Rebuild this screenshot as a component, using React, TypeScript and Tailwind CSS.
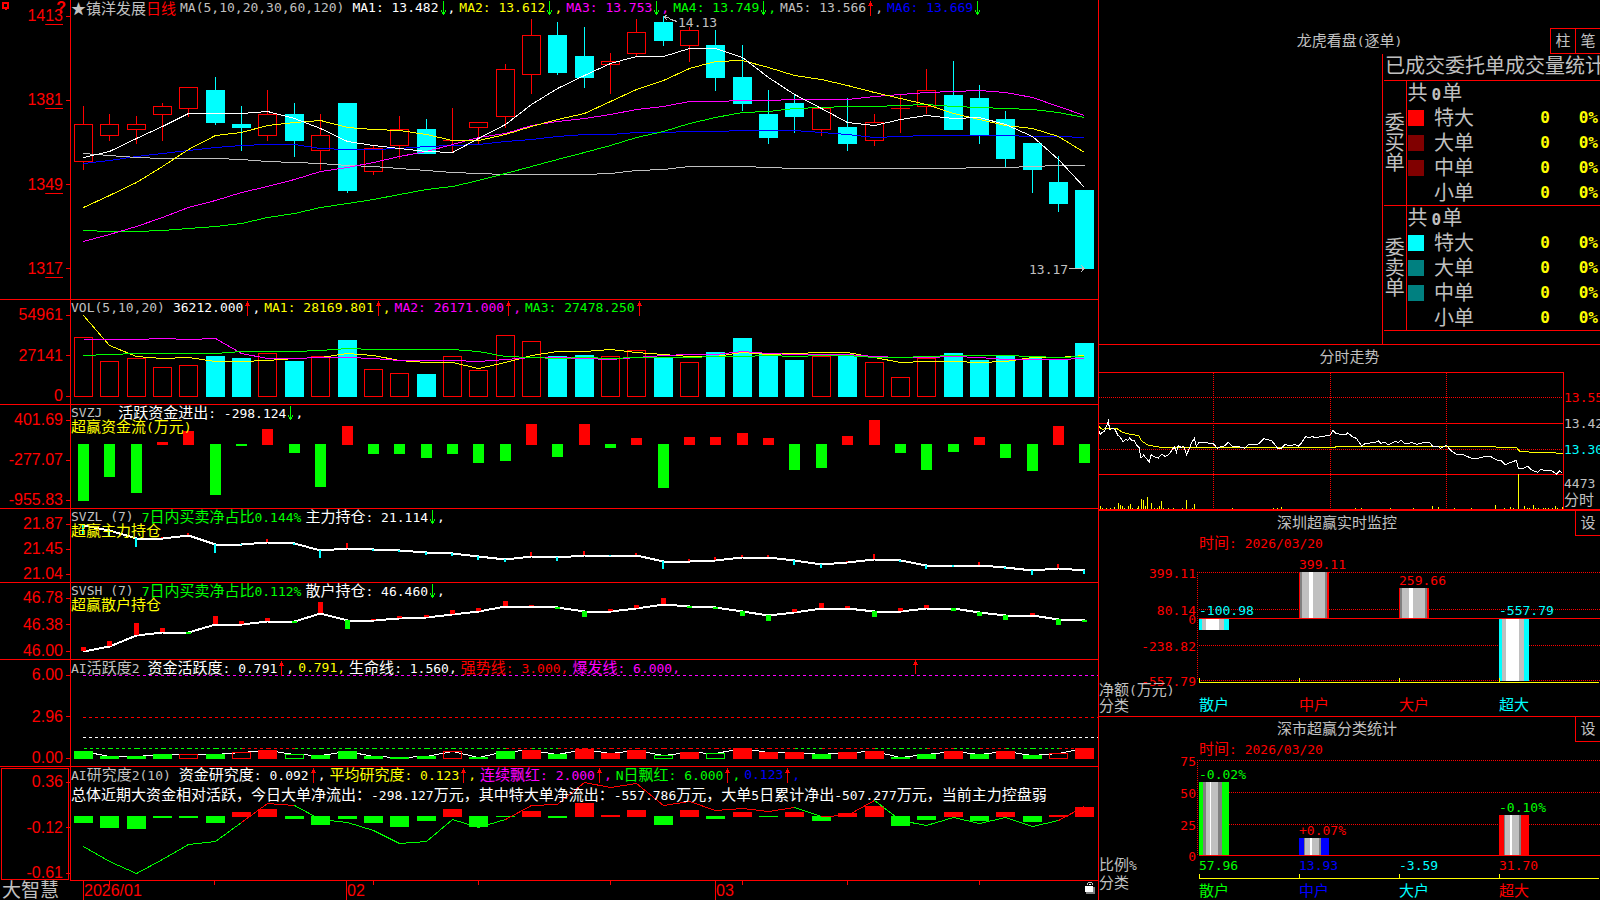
import type { ReactNode } from "react";

const CJK = /([\u3000-\u9fff\uff00-\uffef★]+)/;

// x of the i-th trading day
const X0 = 83;
const STEP = 26.35;
const cx = (i: number) => Math.round(X0 + i * STEP);

type Dir = "up" | "down";

// [rising, high, body top, body bottom, low]
const CANDLES: [number, number, number, number, number][] = [
  [1, 106, 124, 161, 170], [1, 114, 124, 135, 141], [1, 116, 124, 129, 144], [1, 103, 106, 114, 141],
  [1, 87, 87, 108, 117], [0, 77, 90, 123, 125], [0, 106, 124, 128, 151], [1, 90, 114, 135, 141],
  [0, 103, 114, 141, 157], [1, 114, 135, 150, 170], [0, 103, 103, 191, 193], [1, 146, 148, 171, 175],
  [1, 116, 129, 145, 159], [0, 119, 129, 154, 154], [1, 108, 140, 140, 153], [1, 122, 122, 127, 144],
  [1, 64, 69, 116, 128], [1, 19, 35, 74, 94], [0, 22, 35, 73, 75], [0, 27, 56, 78, 88],
  [1, 53, 61, 64, 94], [1, 19, 32, 53, 57], [0, 16, 22, 41, 46], [1, 27, 30, 45, 62],
  [0, 30, 45, 78, 91], [0, 45, 77, 104, 111], [0, 90, 114, 138, 144], [0, 94, 103, 117, 133],
  [1, 107, 108, 129, 136], [0, 98, 127, 144, 151], [1, 114, 122, 140, 146], [1, 95, 108, 108, 133],
  [1, 69, 90, 106, 114], [0, 61, 95, 130, 130], [0, 85, 98, 135, 144], [0, 111, 119, 159, 167],
  [0, 143, 143, 170, 193], [0, 156, 182, 204, 212], [0, 190, 190, 269, 269],
];

const MA: [string, number[]][] = [
  ["#0000ff", [163, 160, 156, 153, 150, 147, 145, 144, 144, 148, 149, 149, 148, 146, 145, 144, 141, 139, 136, 134, 134, 132, 132, 131, 131, 130, 130, 130, 132, 134, 137, 136, 135, 135, 135, 135, 136, 136, 137]],
  ["#c0c0c0", [153, 155, 157, 158, 158, 158, 159, 161, 162, 163, 165, 166, 168, 170, 172, 173, 174, 174, 174, 174, 173, 170, 169, 166, 166, 166, 167, 168, 168, 168, 168, 168, 168, 168, 167, 167, 166, 165, 165]],
  ["#00ff00", [230, 231, 231, 230, 228, 226, 223, 217, 213, 207, 203, 199, 194, 189, 186, 180, 173, 166, 159, 152, 145, 137, 131, 123, 117, 112, 111, 108, 107, 106, 106, 105, 104, 106, 107, 108, 109, 112, 117]],
  ["#ff00ff", [241, 234, 226, 217, 207, 200, 192, 186, 179, 171, 167, 162, 156, 151, 144, 137, 133, 125, 121, 118, 114, 109, 106, 101, 101, 100, 100, 99, 99, 99, 96, 94, 92, 91, 90, 92, 97, 106, 115]],
  ["#ffff00", [207, 195, 182, 166, 149, 135, 132, 125, 122, 120, 127, 129, 130, 134, 140, 140, 134, 126, 119, 113, 101, 89, 80, 68, 61, 60, 67, 75, 79, 85, 92, 98, 104, 113, 119, 125, 128, 136, 152]],
  ["#ffffff", [157, 151, 138, 126, 113, 113, 113, 111, 118, 128, 141, 145, 148, 151, 152, 138, 124, 104, 88, 75, 63, 56, 56, 48, 48, 57, 77, 94, 108, 122, 125, 119, 115, 118, 117, 124, 136, 159, 187]],
];

const VOL = [337, 361, 358, 367, 365, 356, 358, 353, 361, 356, 340, 369, 373, 374, 356, 370, 335, 341, 356, 355, 356, 350, 358, 362, 352, 338, 354, 360, 356, 355, 362, 377, 358, 353, 360, 356, 358, 360, 343];

const VOL_MA: [string, number[]][] = [
  ["#ffff00", [315, 345, 356, 358, 357, 361, 361, 360, 358, 357, 353, 355, 360, 362, 362, 368, 362, 355, 351, 351, 349, 352, 354, 356, 356, 352, 354, 353, 352, 352, 357, 362, 361, 361, 362, 361, 357, 357, 355]],
  ["#ff00ff", [339, 339, 339, 338, 339, 338, 353, 358, 358, 357, 357, 358, 360, 360, 360, 361, 359, 357, 357, 358, 359, 357, 355, 354, 354, 351, 353, 354, 354, 354, 356, 357, 357, 356, 357, 359, 359, 359, 358]],
  ["#00ff00", [355, 354, 353, 353, 353, 353, 351, 351, 351, 350, 348, 349, 349, 349, 349, 351, 356, 357, 358, 357, 358, 357, 357, 357, 356, 356, 355, 356, 355, 355, 357, 357, 356, 355, 355, 355, 356, 357, 356]],
];

// bar ends around a zero line at 444
const FLOW = [501, 477, 493, 442, 431, 495, 446, 429, 453, 487, 426, 454, 454, 458, 454, 463, 461, 424, 457, 424, 448, 438, 488, 437, 437, 433, 438, 470, 468, 436, 420, 453, 470, 452, 437, 458, 471, 426, 463];

const MAIN_HOLD = [525, 530, 538, 538, 535, 544, 544, 542, 543, 550, 548, 549, 550, 552, 553, 556, 559, 556, 557, 555, 555, 555, 561, 561, 560, 557, 557, 560, 564, 562, 559, 560, 565, 565, 565, 567, 570, 568, 570];
const MAIN_TICK = [535, 536, 547, 537, 533, 553, 545, 539, 545, 558, 543, 551, 552, 555, 556, 560, 562, 552, 561, 551, 556, 553, 569, 559, 557, 555, 555, 565, 568, 561, 554, 562, 569, 567, 562, 569, 575, 564, 574];

const RETAIL_HOLD = [651, 646, 635, 632, 632, 624, 624, 621, 621, 613, 620, 620, 618, 617, 614, 611, 606, 606, 607, 611, 611, 608, 604, 606, 607, 611, 615, 612, 608, 608, 611, 611, 608, 608, 612, 615, 615, 619, 620];
const RETAIL_TICK = [647, 641, 623, 628, 634, 616, 621, 618, 623, 602, 629, 619, 616, 615, 610, 608, 601, 605, 609, 617, 609, 605, 598, 608, 609, 616, 621, 609, 603, 606, 617, 608, 605, 611, 616, 620, 613, 625, 622];

// G/R filled, g/r hollow
const ACTIVE_KIND = "GGGGrGrRgGGGGGrGGRGRRRgRgRRRGRRGGRGRGrR";
const ACTIVE = [751, 756, 756, 754, 754, 754, 752, 750, 754, 755, 751, 756, 757, 756, 751, 757, 751, 750, 754, 749, 753, 750, 755, 752, 753, 748, 752, 752, 754, 752, 751, 757, 754, 751, 754, 751, 755, 753, 748];
const ACTIVE_RED = [6, 7, 16, 18, 19, 20, 21, 22, 23, 24, 25, 26, 28, 29, 32, 34, 37];

const STUDY = [823, 828, 829, 818, 818, 823, 812, 809, 819, 825, 819, 823, 827, 821, 809, 827, 817, 811, 818, 803, 815, 810, 825, 810, 819, 812, 817, 812, 821, 813, 806, 826, 820, 812, 821, 812, 822, 815, 807];
const STUDY_LINE = [846, 861, 873, 859, 844, 841, 822, 803, 805, 819, 822, 830, 843, 841, 819, 827, 819, 805, 804, 782, 787, 783, 805, 801, 810, 808, 811, 807, 816, 815, 800, 820, 825, 817, 823, 817, 826, 820, 806];
const STUDY_RED = [6, 7, 16, 17, 18, 19, 20, 21, 22, 23, 24, 25, 26, 28, 29, 37];

const PRICE =
  "12,272 16,283 22,277 28,274 33,262 40,244 44,268 52,266 60,268 68,285 76,292 84,306 92,298 98,301 104,294 112,303 118,301 124,314 132,322 138,355 146,345 156,358 163,366 168,344 178,350 190,354 200,343 210,349 222,343 230,332 238,320 244,337 250,316 258,322 266,318 275,344 282,328 290,308 298,296 304,318 312,307 335,307 345,312 354,310 367,325 378,319 388,318 400,307 410,318 430,320 450,325 460,314 490,312 506,296 530,302 548,325 560,324 570,314 585,317 600,314 610,318 620,308 632,290 642,293 652,289 660,294 672,291 690,288 705,286 714,272 722,280 735,283 752,285 758,278 772,290 784,295 800,318 812,310 840,308 850,302 858,311 868,306 880,314 890,310 900,304 910,308 918,300 930,312 950,308 965,313 985,308 1005,308 1012,318 1028,318 1036,325 1054,316 1068,332 1084,343 1106,345 1128,354 1148,355 1168,350 1188,350 1205,360 1218,362 1230,374 1248,367 1264,361 1270,385 1288,384 1298,379 1308,389 1328,397 1338,387 1350,392 1370,392 1384,402 1394,392 1402,400";
const AVERAGE =
  "12,260 22,268 40,265 64,265 84,278 108,283 132,287 140,303 160,316 198,322 272,324 300,322 720,322 724,319 1198,319 1204,322 1264,322 1274,334 1314,337 1372,338 1404,341";
const MINUTE_VOL = [
  [16, 498], [22, 504], [34, 504], [46, 503], [58, 501], [70, 489], [76, 495], [82, 498], [88, 504], [100, 498], [106, 492], [112, 503],
  [127, 504], [130, 498], [139, 477], [145, 480], [151, 498], [157, 471], [169, 489], [178, 504], [187, 504], [193, 498], [199, 483],
  [205, 503], [220, 504], [235, 504], [262, 504], [274, 480], [292, 503], [298, 492], [412, 504], [535, 504], [547, 504], [559, 501],
  [782, 504], [800, 504], [886, 504], [955, 504], [1012, 498], [1030, 501], [1078, 504], [1129, 504], [1201, 495], [1228, 504],
  [1246, 501], [1255, 504], [1270, 403], [1288, 498], [1297, 503], [1303, 504], [1315, 495], [1321, 504], [1330, 503], [1345, 504],
  [1351, 504], [1360, 504], [1372, 504], [1381, 498], [1387, 504], [1402, 501],
];

function Run({ text }: { text: string }) {
  return (
    <>
      {text.split(CJK).map((part, i) =>
        CJK.test(part) ? <span key={i} className="text-[15px]">{part}</span> : part
      )}
    </>
  );
}

function Arrow({ dir }: { dir: Dir }) {
  return (
    <svg width="9" height="15" viewBox="0 0 9 15" shapeRendering="crispEdges" className="shrink-0" aria-hidden>
      {dir === "up" ? (
        <path d="M4 0h1v15h-1zM3 2h3v2h-3zM2 4h5v1h-5z" fill="#ff0000" />
      ) : (
        <path d="M4 0h1v14h-1zM3 11h3v2h-3zM2 9h1v2h-1zM6 9h1v2h-1z" fill="#00ff00" />
      )}
    </svg>
  );
}

function Item({ text, color, dir, end = "," }: { text: string; color: string; dir?: Dir; end?: string }) {
  return (
    <span className={`flex items-center ${color}`}>
      <span><Run text={text} /></span>
      {dir && <Arrow dir={dir} />}
      {end}
    </span>
  );
}

function Head({ children }: { children: ReactNode }) {
  return <div className="flex h-4 items-center gap-1 leading-4">{children}</div>;
}

function SubHead({ text }: { text: string }) {
  return <div className="h-[15px] leading-[13px] text-[#ffff00]"><Run text={text} /></div>;
}

function Label({ text }: { text: string }) {
  return <span className="mr-1 text-[#c0c0c0]"><Run text={text} /></span>;
}

function Scale({ labels, price }: { labels: string[]; price?: boolean }) {
  return (
    <div className={`flex h-full flex-col justify-between ${price ? "pb-[22px] pt-2" : "pt-[7px]"}`}>
      {labels.map(l => (
        <div key={l} className="flex items-center justify-end gap-[3px] font-['Liberation_Sans',sans-serif] text-base leading-4 text-[#ff0000]">
          {price ? (
            <span>{l.slice(0, 2)}<span className="underline decoration-1 underline-offset-[3px]">{l.slice(2)}</span></span>
          ) : l}
          <span className="h-px w-1 bg-[#ff0000]" />
        </div>
      ))}
    </div>
  );
}

function Panel({ labels, head, box, top, frame, children }: {
  labels: string[];
  head: ReactNode;
  box: string;
  top?: boolean;
  frame?: boolean;
  children: ReactNode;
}) {
  return (
    <section className="grid min-h-0 grid-cols-[71px_minmax(0,1fr)]">
      <div className={`relative min-h-0 border-r border-[#ff0000] ${frame ? "before:absolute before:inset-px before:border before:border-[#ff0000]" : "border-b"}`}>
        {top && (
          <>
            <svg width="8" height="9" viewBox="0 0 8 9" shapeRendering="crispEdges" className="absolute left-0.5 top-0.5" aria-hidden>
              <path d="M0 0h7v7h-2v1h-2v-1h-3zM2 2v3h3v-3z" fill="#ff0000" fillRule="evenodd" />
            </svg>
            <span className="absolute right-1 top-0 font-['Liberation_Sans',sans-serif] text-base font-bold leading-4 text-[#ff0000]">?</span>
          </>
        )}
        <Scale labels={labels} price={top} />
      </div>
      <div className="grid min-h-0 border-b border-[#ff0000]">
        <svg viewBox={box} preserveAspectRatio="none" shapeRendering="crispEdges" className="col-start-1 row-start-1 h-full min-h-0 w-full overflow-hidden">
          {children}
        </svg>
        <div className="z-10 col-start-1 row-start-1 min-w-0 whitespace-pre">{head}</div>
      </div>
    </section>
  );
}

function Line({ ys, color, width = 1 }: { ys: number[]; color: string; width?: number }) {
  return (
    <polyline
      points={ys.map((y, i) => `${cx(i) + 0.5},${y + 0.5}`).join(" ")}
      fill="none"
      stroke={color}
      strokeWidth={width}
    />
  );
}

function Box({ i, y, bottom, up }: { i: number; y: number; bottom: number; up: boolean }) {
  return up ? (
    <rect x={cx(i) - 8.5} y={y + 0.5} width={18} height={bottom - y - 1} fill="none" stroke="#ff0000" />
  ) : (
    <rect x={cx(i) - 9} y={y} width={19} height={bottom - y} fill="#00ffff" />
  );
}

function Segments({ ys, red, dash }: { ys: number[]; red: number[]; dash?: string }) {
  return (
    <>
      {ys.slice(1).map((y, i) => (
        <line
          key={i}
          x1={cx(i) + 0.5}
          y1={ys[i] + 0.5}
          x2={cx(i + 1) + 0.5}
          y2={y + 0.5}
          stroke={red.includes(i) ? "#ff0000" : "#00ff00"}
          strokeDasharray={dash}
        />
      ))}
    </>
  );
}

// Main price chart and indicators

function PriceChart() {
  return (
    <>
      {CANDLES.map(([up, hi, top, bottom, lo], i) => (
        <g key={i}>
          {up ? (
            <>
              <rect x={cx(i)} y={hi} width={1} height={top - hi} fill="#ff0000" />
              <rect x={cx(i)} y={bottom} width={1} height={lo - bottom} fill="#ff0000" />
              {top === bottom ? (
                <rect x={cx(i) - 9} y={top} width={19} height={1} fill="#ff0000" />
              ) : (
                <rect x={cx(i) - 8.5} y={top + 0.5} width={18} height={bottom - top} fill="none" stroke="#ff0000" />
              )}
            </>
          ) : (
            <>
              <rect x={cx(i)} y={hi} width={1} height={lo - hi} fill="#00ffff" />
              <rect x={cx(i) - 9} y={top} width={19} height={bottom - top} fill="#00ffff" />
            </>
          )}
        </g>
      ))}
      {MA.map(([color, ys]) => <Line key={color} ys={ys} color={color} />)}
      <path d="M664 17.5l4 0l3 2l6 2M664 17l3 3M664 17l3-2M1069 268.5h15M1081 265l3 3.5l-3 3.5" fill="none" stroke="#c0c0c0" />
      <g fill="#c0c0c0" className="text-[13px]">
        <text x="678" y="27">14.13</text>
        <text x="1029" y="274">13.17</text>
      </g>
    </>
  );
}

function Ticks({ line, ends, w, down }: { line: number[]; ends: number[]; w: number; down: string }) {
  return (
    <>
      {ends.map((e, i) => {
        const y = line[i];
        return (
          <rect
            key={i}
            x={cx(i) - Math.floor(w / 2)}
            y={Math.min(e, y)}
            width={w}
            height={Math.max(Math.abs(e - y), 1)}
            fill={e < y ? "#ff0000" : down}
          />
        );
      })}
    </>
  );
}

const DAY_TICKS = [109, 214, 373, 478, 610, 742, 847, 979];

function TimeAxis() {
  return (
    <div className="grid min-h-0 grid-cols-[71px_minmax(0,1fr)]">
      <div className="whitespace-nowrap pl-0.5 text-[19px] leading-[19px] text-[#c0c0c0]">大智慧</div>
      <div className="grid min-h-0">
        <div className="col-start-1 row-start-1 grid grid-cols-[12fr_263fr_369fr_383fr] font-['Liberation_Sans',sans-serif] text-base leading-[19px] text-[#ff0000]">
          <span />
          <span className="border-l border-[#ff0000]">2026/01</span>
          <span className="border-l border-[#ff0000]">02</span>
          <span className="flex justify-between border-l border-[#ff0000]">
            03
            <svg width="10" height="12" viewBox="0 0 10 12" shapeRendering="crispEdges" className="mr-[3px] mt-px" aria-hidden>
              <path d="M2 3V1h1V0h4v1h1v2h-1V1H3v2z" fill="#c0c0c0" />
              <path d="M1 5h9v7h-9z" fill="#808080" />
              <path d="M0 4h8v6h-8z" fill="#ffffff" />
              <path d="M4 2h2v1h-2z" fill="#ffffff" />
            </svg>
          </span>
        </div>
        <svg viewBox="71 881 1027 19" preserveAspectRatio="none" shapeRendering="crispEdges" className="col-start-1 row-start-1 h-full min-h-0 w-full" aria-hidden>
          {DAY_TICKS.map(x => <rect key={x} x={x} y={881} width={1} height={4} fill="#ff0000" />)}
        </svg>
      </div>
    </div>
  );
}

// Right-hand side panels

function TextButton({ children }: { children: string }) {
  return (
    <button type="button" className="h-[25px] w-[25px] border-b border-l border-[#ff0000] text-[15px] leading-none text-[#c0c0c0]">
      {children}
    </button>
  );
}

const ORDERS = [
  { side: "委买单", colors: ["bg-[#ff0000]", "bg-[#800000]", "bg-[#800000]", ""] },
  { side: "委卖单", colors: ["bg-[#00ffff]", "bg-[#008080]", "bg-[#008080]", ""] },
];
const SIZES = ["特大", "大单", "中单", "小单"];

function OrderStats() {
  return (
    <section className="flex min-h-0 flex-col overflow-hidden border-b border-[#ff0000] text-[#c0c0c0]">
      <div className="grid h-[54px] shrink-0 items-end">
        <h2 className="col-start-1 row-start-1 mb-1 text-center text-[13px] leading-4"><Run text="龙虎看盘(逐单)" /></h2>
        <div className="z-10 col-start-1 row-start-1 flex justify-self-end border-t border-[#ff0000]">
          <TextButton>柱</TextButton>
          <TextButton>笔</TextButton>
        </div>
      </div>
      <div className="flex min-h-0 flex-1">
        <div className="min-w-0 flex-1" />
        <div className="w-[218px] shrink-0 border-l border-[#ff0000] pl-px text-xl leading-5">
          <h3 className="h-[26px] whitespace-nowrap pl-px leading-6">已成交委托单成交量统计</h3>
          <table className="w-full table-fixed border-collapse border-y border-[#ff0000]">
            <colgroup>
              <col className="w-[22px]" />
              <col className="w-7" />
              <col className="w-[76px]" />
              <col />
              <col className="w-[50px]" />
            </colgroup>
            {ORDERS.map(({ side, colors }) => (
              <tbody key={side} className="border-t border-[#ff0000]">
                <tr className="h-[25px]">
                  <th rowSpan={5} scope="rowgroup" className="border-r border-[#ff0000] p-0 font-normal">
                    {side.split("").map(c => <span key={c} className="block">{c}</span>)}
                  </th>
                  <td colSpan={4} className="p-0 pl-px">
                    共<b className="pl-1 pr-px text-base leading-4">0</b>单
                  </td>
                </tr>
                {SIZES.map((s, i) => (
                  <tr key={s} className="h-[25px]">
                    <td className="p-0 pl-px"><span className={`block h-4 w-4 ${colors[i]}`} /></td>
                    <td className="p-0">{s}</td>
                    <td className="p-0 text-right text-base font-bold leading-5 text-[#ffff00]">0</td>
                    <td className="p-0 pr-0.5 text-right text-base font-bold leading-5 text-[#ffff00]">0%</td>
                  </tr>
                ))}
              </tbody>
            ))}
          </table>
        </div>
      </div>
    </section>
  );
}

function Intraday() {
  return (
    <section className="flex min-h-0 flex-col overflow-hidden border-b-2 border-[#ff0000]">
      <h2 className="h-[27px] shrink-0 text-center text-[15px] leading-[25px] text-[#c0c0c0]">分时走势</h2>
      <div className="flex min-h-0 flex-1">
        <div className="min-w-0 flex-1 border-r border-t border-[#ff0000]">
          <svg viewBox="12 99 1392 408" preserveAspectRatio="none" shapeRendering="crispEdges" className="h-full w-full">
            <g stroke="#ff0000" strokeWidth="3">
              <path d="M12 250.500H1404M12 403.500H1404" />
              <path d="M12 172.500H1404M12 328.500H1404M355.500 99V507M706.500 99V507M1054.500 99V507" strokeDasharray="3 3" />
            </g>
            {MINUTE_VOL.map(([x, y]) => <rect key={x} x={x - 1} y={y} width={3} height={507 - y} fill="#ffff00" />)}
            <polyline points={AVERAGE} fill="none" stroke="#ffff00" strokeWidth="3" />
            <polyline points={PRICE} fill="none" stroke="#ffffff" strokeWidth="3" />
          </svg>
        </div>
        <div className="flex w-9 shrink-0 flex-col gap-2.5 whitespace-nowrap pt-[18px] text-[13px] leading-4 text-[#c0c0c0]">
          <span className="text-[#ff0000]">13.55</span>
          <span>13.42</span>
          <span className="text-[#00ffff]">13.30</span>
          <div className="mt-2">
            <div>4473</div>
            <div className="text-[15px]">分时</div>
          </div>
        </div>
      </div>
    </section>
  );
}

type Bar = {
  name: string;
  color: string;
  label?: string;
  labelColor?: string;
  labelY?: number;
  y?: number;
  h?: number;
  value?: string;
  stripes?: [string, number][];
};

const stripes = (edge: string, widths: number[], inner: string[]): [string, number][] =>
  widths.map((w, i) => [i === 0 || i === widths.length - 1 ? edge : inner[i - 1], w]);

const DOWN = ["#c0c0c0", "#ffffff", "#c0c0c0"];
const UP = ["#808080", "#c0c0c0", "#ffffff", "#c0c0c0", "#808080"];

const NET: Bar[] = [
  { name: "散户", color: "#00ffff", label: "-100.98", labelY: 615, y: 619, h: 11, stripes: stripes("#00ffff", [3, 4, 13, 5, 5], DOWN) },
  { name: "中户", color: "#ff0000", label: "399.11", labelY: 569, y: 572, h: 46, stripes: stripes("#ff0000", [1, 2, 7, 4, 12, 2, 2], UP) },
  { name: "大户", color: "#ff0000", label: "259.66", labelY: 585, y: 588, h: 30, stripes: stripes("#ff0000", [1, 2, 7, 4, 12, 2, 2], UP) },
  { name: "超大", color: "#00ffff", label: "-557.79", labelY: 615, y: 619, h: 62, stripes: stripes("#00ffff", [3, 4, 13, 5, 5], DOWN) },
];

const RATIO: Bar[] = [
  { name: "散户", color: "#00ff00", value: "57.96", label: "-0.02%", labelY: 779, y: 782, h: 73, stripes: stripes("#00ff00", [4, 3, 4, 1, 7, 4, 7], UP) },
  { name: "中户", color: "#0000ff", value: "13.93", label: "+0.07%", labelColor: "#ff0000", labelY: 835, y: 838, h: 17, stripes: stripes("#0000ff", [5, 1, 5, 2, 7, 2, 8], UP) },
  { name: "大户", color: "#00ffff", value: "-3.59" },
  { name: "超大", color: "#ff0000", value: "31.70", label: "-0.10%", labelColor: "#00ff00", labelY: 812, y: 815, h: 40, stripes: stripes("#ff0000", [5, 1, 5, 2, 7, 2, 8], UP) },
];

function BarPanel({ title, box, bars, scale, grid, zero, axis, captions, nameY, last }: {
  title: string;
  box: string;
  bars: Bar[];
  scale: [string, number][];
  grid: number[];
  zero: number;
  axis: number;
  captions: [string, number][];
  nameY: number;
  last?: boolean;
}) {
  const bottom = grid[grid.length - 1];
  return (
    <section className={`flex min-h-0 flex-col border-[#ff0000] ${last ? "" : "border-b"}`}>
      <div className="flex h-[25px] shrink-0 items-start">
        <h2 className="flex-1 text-center text-[15px] leading-[25px] text-[#c0c0c0]">{title}</h2>
        <TextButton>设</TextButton>
      </div>
      <div className="flex h-[15px] shrink-0 items-center pl-[100px] leading-[15px] text-[#ff0000]">
        <span><Run text="时间: 2026/03/20" /></span>
      </div>
      <svg viewBox={box} preserveAspectRatio="none" shapeRendering="crispEdges" className="min-h-0 w-full flex-1 overflow-visible">
        <g stroke="#ff0000">
          <path d={grid.map(y => `M1199 ${y + 0.5}H1600`).join("") + `M1197.500 ${grid[0]}V${Math.max(bottom, zero)}`} strokeDasharray="1 1" />
          <path d={`M1199 ${zero + 0.5}H1600`} />
        </g>
        {bars.map((b, i) => {
          let x = 1199 + i * 100;
          return b.stripes?.map(([fill, w], k) => {
            const r = <rect key={`${i}-${k}`} x={x} y={b.y} width={w} height={b.h} fill={fill} />;
            x += w;
            return r;
          });
        })}
        <path
          d={`M1199 ${axis + 0.5}H1599` + bars.map((_, i) => `M${1199.5 + i * 100} ${axis}v-4`).join("")}
          stroke="#ffff00"
        />
        <g fill="#ff0000" textAnchor="end">
          {scale.map(([t, y]) => <text key={t} x={1196} y={y + 5}>{t}</text>)}
        </g>
        {bars.map((b, i) => (
          <g key={b.name} fill={b.color}>
            {b.label && <text x={1199 + i * 100} y={b.labelY} fill={b.labelColor ?? b.color}>{b.label}</text>}
            {b.value && <text x={1199 + i * 100} y={870}>{b.value}</text>}
            <text x={1199 + i * 100} y={nameY + 5} className="text-[15px]">{b.name}</text>
          </g>
        ))}
        <g fill="#c0c0c0">
          {captions.map(([t, y]) => (
            <text key={t} x={1099} y={y + 6}>
              {t.split(CJK).map((p, k) => <tspan key={k} className={CJK.test(p) ? "text-[15px]" : "text-[13px]"}>{p}</tspan>)}
            </text>
          ))}
        </g>
      </svg>
    </section>
  );
}

export default function App() {
  return (
    <main className="grid h-screen min-h-[700px] grid-cols-[minmax(0,1099fr)_minmax(0,501fr)] overflow-hidden bg-black font-['DejaVu_Sans_Mono','Noto_Sans_CJK_SC',monospace] text-[13px] text-white">
      <div className="grid min-h-0 grid-rows-[300fr_105fr_104fr_74fr_77fr_107fr_114fr_19fr] border-r border-[#ff0000]">
        <Panel
          top
          labels={["1413", "1381", "1349", "1317"]}
          box="71 0 1027 299"
          head={
            <Head>
              <span className="flex font-['Noto_Sans_CJK_SC',sans-serif] text-[15px] text-[#c0c0c0]">
                ★镇洋发展<span className="text-[#ff0000]">日线</span>
              </span>
              <Label text="MA(5,10,20,30,60,120)" />
              <Item text="MA1: 13.482" color="text-white" dir="down" />
              <Item text="MA2: 13.612" color="text-[#ffff00]" dir="down" />
              <Item text="MA3: 13.753" color="text-[#ff00ff]" dir="down" />
              <Item text="MA4: 13.749" color="text-[#00ff00]" dir="down" />
              <Item text="MA5: 13.566" color="text-[#c0c0c0]" dir="up" />
              <Item text="MA6: 13.669" color="text-[#0000ff]" dir="down" end="" />
            </Head>
          }
        >
          <PriceChart />
        </Panel>

        <Panel
          labels={["54961", "27141", "0"]}
          box="71 300 1027 104"
          head={
            <Head>
              <Label text="VOL(5,10,20)" />
              <Item text="36212.000" color="text-white" dir="up" />
              <Item text="MA1: 28169.801" color="text-[#ffff00]" dir="up" />
              <Item text="MA2: 26171.000" color="text-[#ff00ff]" dir="up" />
              <Item text="MA3: 27478.250" color="text-[#00ff00]" dir="up" end="" />
            </Head>
          }
        >
          {VOL.map((y, i) => <Box key={i} i={i} y={y} bottom={397} up={CANDLES[i][0] === 1} />)}
          {VOL_MA.map(([color, ys]) => <Line key={color} ys={ys} color={color} />)}
        </Panel>

        <Panel
          labels={["401.69", "-277.07", "-955.83"]}
          box="71 405 1027 103"
          head={
            <>
              <Head>
                <Label text="SVZJ " />
                <Item text="活跃资金进出: -298.124" color="text-white" dir="down" />
              </Head>
              <SubHead text="超赢资金流(万元)" />
            </>
          }
        >
          {FLOW.map((y, i) => (
            <rect
              key={i}
              x={cx(i) - 5}
              y={Math.min(y, 444)}
              width={11}
              height={y < 444 ? 445 - y : y - 444}
              fill={y < 444 ? "#ff0000" : "#00ff00"}
            />
          ))}
        </Panel>

        <Panel
          labels={["21.87", "21.45", "21.04"]}
          box="71 509 1027 73"
          head={
            <>
              <Head>
                <Label text="SVZL (7)" />
                <Item text="7日内买卖净占比0.144%" color="text-[#00ff00]" end="" />
                <Item text="主力持仓: 21.114" color="text-white" dir="down" />
              </Head>
              <SubHead text="超赢主力持仓" />
            </>
          }
        >
          <Line ys={MAIN_HOLD} color="#ffffff" width={2} />
          <Ticks line={MAIN_HOLD} ends={MAIN_TICK} w={2} down="#00ffff" />
        </Panel>

        <Panel
          labels={["46.78", "46.38", "46.00"]}
          box="71 583 1027 76"
          head={
            <>
              <Head>
                <Label text="SVSH (7)" />
                <Item text="7日内买卖净占比0.112%" color="text-[#00ff00]" end="" />
                <Item text="散户持仓: 46.460" color="text-white" dir="down" />
              </Head>
              <SubHead text="超赢散户持仓" />
            </>
          }
        >
          <Line ys={RETAIL_HOLD} color="#ffffff" width={2} />
          <Ticks line={RETAIL_HOLD} ends={RETAIL_TICK} w={5} down="#00ff00" />
        </Panel>

        <Panel
          labels={["6.00", "2.96", "0.00"]}
          box="71 660 1027 106"
          head={
            <Head>
              <Label text="AI活跃度2" />
              <Item text="资金活跃度: 0.791" color="text-white" dir="up" />
              <Item text="0.791" color="text-[#ffff00]" />
              <Item text="生命线: 1.560" color="text-white" />
              <Item text="强势线: 3.000" color="text-[#ff0000]" />
              <Item text="爆发线: 6.000" color="text-[#ff00ff]" />
            </Head>
          }
        >
          <g strokeDasharray="3 3">
            <path d="M83 675.500H1098" stroke="#ff00ff" />
            <path d="M83 717.500H1098" stroke="#ff0000" />
            <path d="M83 737.500H1098" stroke="#ffffff" />
          </g>
          <Segments ys={ACTIVE.map(() => 748)} red={ACTIVE_RED} dash="3 3" />
          <Line ys={ACTIVE} color="#ffffff" />
          {ACTIVE.map((y, i) => {
            const kind = ACTIVE_KIND[i];
            const color = kind.toLowerCase() === "r" ? "#ff0000" : "#00ff00";
            return kind === kind.toLowerCase() ? (
              <rect key={i} x={cx(i) - 8.5} y={y + 0.5} width={18} height={758 - y} fill="none" stroke={color} />
            ) : (
              <rect key={i} x={cx(i) - 9} y={y} width={19} height={759 - y} fill={color} />
            );
          })}
          <path d="M915 660h1v14h-1zM914 662h3v2h-3zM913 664h5v1h-5z" fill="#ff0000" />
        </Panel>

        <Panel
          frame
          labels={["0.36", "-0.12", "-0.61"]}
          box="71 767 1027 113"
          head={
            <>
              <Head>
                <Label text="AI研究度2(10)" />
                <Item text="资金研究度: 0.092" color="text-white" dir="up" />
                <Item text="平均研究度: 0.123" color="text-[#ffff00]" dir="up" />
                <Item text="连续飘红: 2.000" color="text-[#ff00ff]" dir="up" />
                <Item text="N日飘红: 6.000" color="text-[#00ff00]" dir="up" />
                <Item text="0.123" color="text-[#0000ff]" dir="up" />
              </Head>
              <p className="mt-1 leading-4">
                <Run text="总体近期大资金相对活跃，今日大单净流出：-298.127万元，其中特大单净流出：-557.786万元，大单5日累计净出-507.277万元，当前主力控盘弱" />
              </p>
            </>
          }
        >
          {STUDY.map((y, i) => (
            <rect
              key={i}
              x={cx(i) - 9}
              y={Math.min(y, 816)}
              width={19}
              height={y < 816 ? 817 - y : y - 816}
              fill={y < 816 ? "#ff0000" : "#00ff00"}
            />
          ))}
          <Segments ys={STUDY_LINE} red={STUDY_RED} />
        </Panel>

        <TimeAxis />
      </div>

      <div className="grid min-h-0 grid-rows-[345fr_166fr_206fr_183fr]">
        <OrderStats />
        <Intraday />
        <BarPanel
          title="深圳超赢实时监控"
          box="1099 551 501 165"
          bars={NET}
          scale={[["399.11", 573], ["80.14", 610], ["0", 619], ["-238.82", 646], ["-557.79", 681]]}
          grid={[572, 609, 645, 680]}
          zero={618}
          axis={682}
          captions={[["净额(万元)", 689], ["分类", 705]]}
          nameY={705}
        />
        <BarPanel
          last
          title="深市超赢分类统计"
          box="1099 757 501 143"
          bars={RATIO}
          scale={[["75", 761], ["50", 793], ["25", 825], ["0", 856]]}
          grid={[760, 792, 824]}
          zero={855}
          axis={878}
          captions={[["比例%", 864], ["分类", 882]]}
          nameY={891}
        />
      </div>
    </main>
  );
}
